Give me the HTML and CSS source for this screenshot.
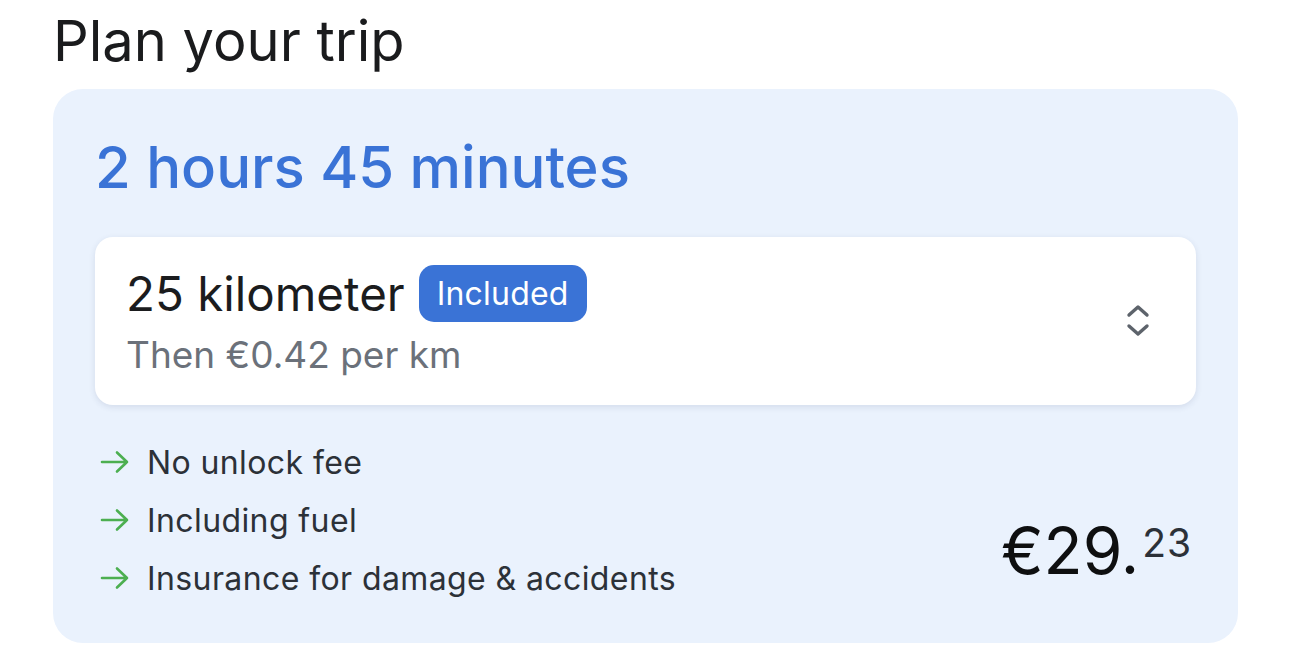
FILE: index.html
```html
<!DOCTYPE html>
<html lang="en">
<head>
<meta charset="utf-8">
<title>Plan your trip</title>
<link rel="stylesheet" href="styles.css">
</head>
<body>
<main class="page">
  <h1 class="title">Plan your trip</h1>
  <section class="card">
    <h2 class="duration">2 hours 45 minutes</h2>
    <div class="select">
      <div class="select-text">
        <div class="select-main">
          <span class="km">25 kilometer</span>
          <span class="badge">Included</span>
        </div>
        <div class="select-sub">Then €0.42 per km</div>
      </div>
      <svg class="chevrons" width="24" height="36" viewBox="0 0 24 36" aria-hidden="true">
        <path d="M3 12 L12 4 L21 12" fill="none" stroke="#5d636b" stroke-width="3.4" stroke-linecap="round" stroke-linejoin="round"/>
        <path d="M3 23 L12 31 L21 23" fill="none" stroke="#5d636b" stroke-width="3.4" stroke-linecap="round" stroke-linejoin="round"/>
      </svg>
    </div>
    <div class="bottom">
      <ul class="features">
        <li class="feature"><svg class="arrow" width="32" height="24" viewBox="0 0 32 24" aria-hidden="true"><path d="M3 12 H28 M18 2.5 L28 12 L18 21.5" fill="none" stroke="#4caf50" stroke-width="2.6" stroke-linecap="round" stroke-linejoin="round"/></svg>No unlock fee</li>
        <li class="feature"><svg class="arrow" width="32" height="24" viewBox="0 0 32 24" aria-hidden="true"><path d="M3 12 H28 M18 2.5 L28 12 L18 21.5" fill="none" stroke="#4caf50" stroke-width="2.6" stroke-linecap="round" stroke-linejoin="round"/></svg>Including fuel</li>
        <li class="feature"><svg class="arrow" width="32" height="24" viewBox="0 0 32 24" aria-hidden="true"><path d="M3 12 H28 M18 2.5 L28 12 L18 21.5" fill="none" stroke="#4caf50" stroke-width="2.6" stroke-linecap="round" stroke-linejoin="round"/></svg>Insurance for damage &amp; accidents</li>
      </ul>
      <div class="price"><span class="price-main">€29.</span><span class="price-cents">23</span></div>
    </div>
  </section>
</main>
</body>
</html>
```

FILE: styles.css
```css
* { box-sizing: border-box; }
html, body { margin: 0; padding: 0; background: #ffffff; }
body {
  font-family: Inter, "Noto Sans", "Liberation Sans", sans-serif;
  color: #1b1c1e;
}
.page {
  padding: 6px 52px 0 53px;
}
.title {
  margin: 0;
  font-size: 56px;
  font-weight: 400;
  line-height: 70px;
  height: 83px;
  color: #1a1b1d;
}
.card {
  width: 1185px;
  height: 554px;
  background: #eaf2fd;
  border-radius: 30px;
  padding: 43px 42px 0 42px;
}
.duration {
  margin: 0 0 35px 0;
  font-size: 58px;
  font-weight: 500;
  line-height: 70px;
  color: #3a73d6;
}
.select {
  height: 168px;
  background: #ffffff;
  border-radius: 18px;
  box-shadow: 0 2px 6px rgba(40, 60, 100, 0.12);
  display: flex;
  align-items: center;
  justify-content: space-between;
  padding: 0 46px 0 31px;
}
.select-main {
  display: flex;
  align-items: center;
  gap: 14px;
  height: 57px;
}
.km {
  font-size: 47.5px;
  line-height: 57px;
  color: #1b1c1e;
}
.badge {
  height: 57px;
  display: inline-flex;
  align-items: center;
  padding: 0 18px;
  background: #3a73d6;
  color: #ffffff;
  border-radius: 15px;
  font-size: 32px;
  letter-spacing: 0.2px;
}
.select-sub {
  margin-top: 10px;
  font-size: 37px;
  line-height: 46px;
  color: #6b717a;
}
.chevrons { display: block; }
.bottom {
  display: flex;
  justify-content: space-between;
  align-items: flex-end;
  margin-top: 28px;
}
.features {
  list-style: none;
  margin: 0;
  padding: 0;
}
.feature {
  display: flex;
  align-items: center;
  height: 58px;
  font-size: 32px;
  letter-spacing: 0.4px;
  color: #2c3138;
}
.arrow {
  margin: 0 16px 0 4px;
  flex: none;
}
.price {
  display: flex;
  align-items: flex-start;
  margin: 0 4px 24px 0;
  color: #0e0f10;
}
.price-main {
  font-size: 64px;
  line-height: 64px;
}
.price-cents {
  font-size: 39px;
  line-height: 37px;
  letter-spacing: 1px;
  color: #2c3138;
  margin-left: 3px;
  margin-top: 5px;
}
```
